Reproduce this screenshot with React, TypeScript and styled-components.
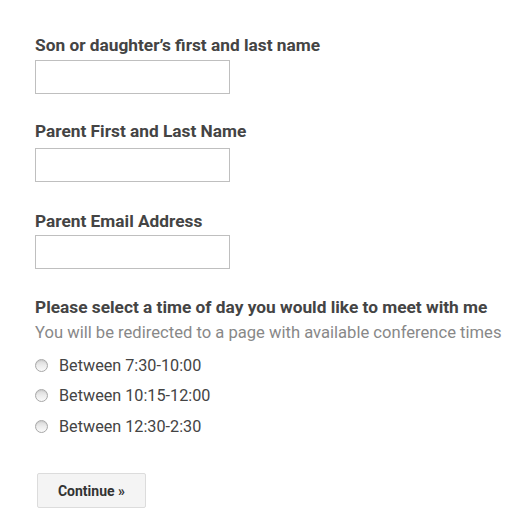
import React from 'react';
import styled, {createGlobalStyle} from 'styled-components';

const GlobalStyle = createGlobalStyle`
  html, body {
    margin: 0;
    padding: 0;
    background: #ffffff;
  }
  body {
    font-family: Roboto, "Liberation Sans", Arial, sans-serif;
    color: #444444;
  }
`

const Form = styled.form`
  display: flex;
  flex-direction: column;
  padding: 35px 0 0 35px;
`

type FieldProps = { $after: number }

const Field = styled.div<FieldProps>`
  display: flex;
  flex-direction: column;
  margin-bottom: ${(props) => props.$after}px;
`

const Label = styled.label<{ $space: number }>`
  font-size: 17.3px;
  font-weight: 700;
  line-height: 20px;
  color: #444444;
  margin-bottom: ${(props) => props.$space}px;
`

const TextInput = styled.input`
  box-sizing: border-box;
  width: 195px;
  height: 34px;
  border: 1px solid #bfbfbf;
  border-radius: 0;
  background: #ffffff;
  padding: 4px 6px;
  font-family: inherit;
  font-size: 14px;
  outline: none;
`

const Heading = styled.div`
  font-size: 17.3px;
  font-weight: 700;
  line-height: 20px;
  color: #444444;
`

const Hint = styled.div`
  font-size: 16.6px;
  line-height: 20px;
  color: #888888;
  margin-top: 6px;
  margin-bottom: 12px;
`

const Options = styled.div`
  display: flex;
  flex-direction: column;
  gap: 10.5px;
`

const Option = styled.label`
  display: flex;
  align-items: center;
  height: 20px;
  font-size: 16.2px;
  color: #444444;
  cursor: pointer;
`

const Radio = styled.input`
  appearance: none;
  -webkit-appearance: none;
  box-sizing: border-box;
  width: 13px;
  height: 13px;
  margin: 0 11px 0 0;
  border-radius: 50%;
  border: 1px solid #a8a8a8;
  background: linear-gradient(#d9d9d9 0%, #ececec 50%, #fafafa 100%);
  box-shadow: inset 0 1px 1px rgba(0, 0, 0, 0.08);
`

const Button = styled.button`
  align-self: flex-start;
  margin: 37px 0 0 2px;
  box-sizing: border-box;
  width: 109px;
  height: 35px;
  border: 1px solid #dcdcdc;
  border-radius: 2px;
  background: #f4f4f4;
  font-family: inherit;
  font-size: 14px;
  font-weight: 700;
  color: #333333;
  cursor: pointer;
`

const fields = [
    {label: "Son or daughter\u2019s first and last name", space: 5, after: 27},
    {label: "Parent First and Last Name", space: 7, after: 29},
    {label: "Parent Email Address", space: 4, after: 28},
]

const times = ["Between 7:30-10:00", "Between 10:15-12:00", "Between 12:30-2:30"]

const App = () => {
    return (
        <>
            <GlobalStyle/>
            <Form onSubmit={(e) => e.preventDefault()}>
                {fields.map((f) => (
                    <Field key={f.label} $after={f.after}>
                        <Label $space={f.space}>{f.label}</Label>
                        <TextInput type="text"/>
                    </Field>
                ))}
                <Heading>Please select a time of day you would like to meet with me</Heading>
                <Hint>You will be redirected to a page with available conference times</Hint>
                <Options>
                    {times.map((t) => (
                        <Option key={t}>
                            <Radio type="radio" name="time"/>
                            {t}
                        </Option>
                    ))}
                </Options>
                <Button type="submit">Continue »</Button>
            </Form>
        </>
    )
}

export default App;
